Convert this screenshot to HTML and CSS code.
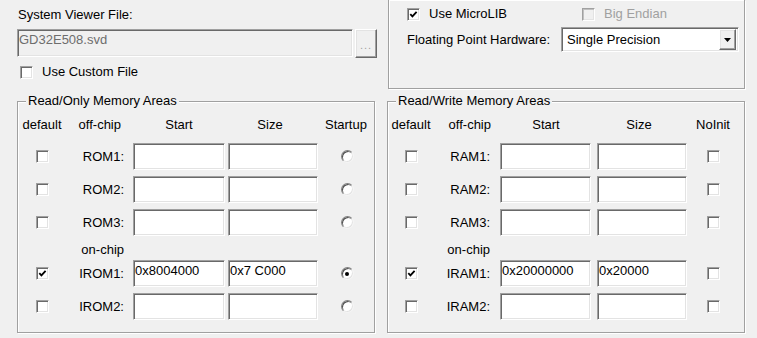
FILE: index.html
```html
<!DOCTYPE html>
<html lang="en">
<head>
    <meta charset="UTF-8">
    <title>Options for Target - Target</title>
    <link rel="stylesheet" href="styles.css">
</head>
<body>
    <div class="dialog">
        <div class="top-row">
            <div class="svd-panel">
                <div class="caption">System Viewer File:</div>
                <div class="file-line">
                    <div class="edit disabled">GD32E508.svd</div>
                    <div class="push-btn">...</div>
                </div>
                <div class="check-line custom">
                    <span class="check"></span>
                    <span>Use Custom File</span>
                </div>
            </div>

            <div class="group open-top">
                <div class="check-line lib">
                    <div class="check-item wide">
                        <span class="check checked"><svg viewBox="0 0 11 11"><path d="M2.3 5.2 4.4 7.4 8.6 2.8"/></svg></span>
                        <span>Use MicroLIB</span>
                    </div>
                    <div class="check-item">
                        <span class="check disabled"></span>
                        <span class="muted">Big Endian</span>
                    </div>
                </div>
                <div class="fp-line">
                    <span class="fp-label">Floating Point Hardware:</span>
                    <div class="combo">
                        <span class="combo-text">Single Precision</span>
                        <span class="combo-btn"><svg viewBox="0 0 7 4"><polygon points="0,0 7,0 3.5,4"/></svg></span>
                    </div>
                </div>
            </div>
        </div>

        <div class="areas">
            <fieldset class="mem-group ro">
                <legend>Read/Only Memory Areas</legend>
                <div class="mem-grid">
                    <span class="hd">default</span>
                    <span class="hd chip">off-chip</span>
                    <span class="hd start">Start</span>
                    <span class="hd size">Size</span>
                    <span class="hd">Startup</span>

                    <span class="check"></span>
                    <span class="row-label">ROM1:</span>
                    <div class="edit"></div>
                    <div class="edit"></div>
                    <span class="radio"></span>

                    <span class="check"></span>
                    <span class="row-label">ROM2:</span>
                    <div class="edit"></div>
                    <div class="edit"></div>
                    <span class="radio"></span>

                    <span class="check"></span>
                    <span class="row-label">ROM3:</span>
                    <div class="edit"></div>
                    <div class="edit"></div>
                    <span class="radio"></span>

                    <span></span>
                    <span class="row-label onchip">on-chip</span>
                    <span></span><span></span><span></span>

                    <span class="check checked"><svg viewBox="0 0 11 11"><path d="M2.3 5.2 4.4 7.4 8.6 2.8"/></svg></span>
                    <span class="row-label">IROM1:</span>
                    <div class="edit">0x8004000</div>
                    <div class="edit">0x7 C000</div>
                    <span class="radio on"></span>

                    <span class="check"></span>
                    <span class="row-label">IROM2:</span>
                    <div class="edit"></div>
                    <div class="edit"></div>
                    <span class="radio"></span>
                </div>
            </fieldset>

            <fieldset class="mem-group rw">
                <legend>Read/Write Memory Areas</legend>
                <div class="mem-grid">
                    <span class="hd">default</span>
                    <span class="hd chip">off-chip</span>
                    <span class="hd start">Start</span>
                    <span class="hd size">Size</span>
                    <span class="hd">NoInit</span>

                    <span class="check"></span>
                    <span class="row-label">RAM1:</span>
                    <div class="edit"></div>
                    <div class="edit"></div>
                    <span class="check"></span>

                    <span class="check"></span>
                    <span class="row-label">RAM2:</span>
                    <div class="edit"></div>
                    <div class="edit"></div>
                    <span class="check"></span>

                    <span class="check"></span>
                    <span class="row-label">RAM3:</span>
                    <div class="edit"></div>
                    <div class="edit"></div>
                    <span class="check"></span>

                    <span></span>
                    <span class="row-label onchip">on-chip</span>
                    <span></span><span></span><span></span>

                    <span class="check checked"><svg viewBox="0 0 11 11"><path d="M2.3 5.2 4.4 7.4 8.6 2.8"/></svg></span>
                    <span class="row-label">IRAM1:</span>
                    <div class="edit">0x20000000</div>
                    <div class="edit">0x20000</div>
                    <span class="check"></span>

                    <span class="check"></span>
                    <span class="row-label">IRAM2:</span>
                    <div class="edit"></div>
                    <div class="edit"></div>
                    <span class="check"></span>
                </div>
            </fieldset>
        </div>
    </div>
</body>
</html>
```

FILE: styles.css
```css
body {
    margin: 0;
    background: #f0f0f0;
    font-family: "Liberation Sans", Arial, sans-serif;
    font-size: 13px;
    line-height: 16px;
    color: #000;
    width: 757px;
    height: 338px;
    overflow: hidden;
}
.dialog {
    padding-left: 17px;
}
.top-row {
    display: flex;
    height: 89px;
}
.svd-panel {
    width: 361px;
    margin-right: 10px;
}
.caption {
    padding: 7px 0 0 1px;
}
.file-line {
    display: flex;
    margin-top: 6px;
}
.file-line .edit {
    width: 336px;
    height: 28px;
}
.push-btn {
    box-sizing: border-box;
    width: 22px;
    height: 29px;
    margin-left: 2px;
    border: 1px solid;
    border-color: #fff #696969 #696969 #fff;
    box-shadow: inset -1px -1px 0 #a0a0a0, inset 1px 1px 0 #e3e3e3;
    color: #a0a0a0;
    font-size: 11px;
    letter-spacing: 1px;
    text-align: center;
    line-height: 30px;
}
.check-line {
    display: flex;
    align-items: center;
}
.check-line.custom {
    margin: 6px 0 0 3px;
}
.check-line.custom .check {
    margin-right: 9px;
}
.group {
    box-sizing: border-box;
    border: 1px solid #a0a0a0;
    box-shadow: inset 1px 1px 0 #fff, 1px 1px 0 #fff;
}
.open-top {
    border-top: none;
    width: 357px;
    height: 89px;
    padding-left: 18px;
}
.check-line.lib {
    padding-top: 6px;
}
.check-item {
    display: flex;
    align-items: center;
}
.check-item.wide {
    width: 175px;
}
.check-item .check {
    margin-right: 9px;
}
.muted {
    color: #a0a0a0;
}
.fp-line {
    display: flex;
    align-items: center;
    margin-top: 5px;
}
.fp-label {
    width: 154px;
}
.combo {
    box-sizing: border-box;
    display: flex;
    align-items: center;
    width: 178px;
    height: 25px;
    background: #fff;
    border: 1px solid;
    border-color: #a0a0a0 #fff #fff #a0a0a0;
    box-shadow: inset 1px 1px 0 #696969, inset -1px -1px 0 #e3e3e3;
    padding: 2px 2px 2px 5px;
}
.combo-text {
    flex: 1;
}
.combo-btn {
    box-sizing: border-box;
    display: flex;
    align-items: center;
    justify-content: center;
    width: 17px;
    height: 21px;
    background: #f0f0f0;
    border: 1px solid;
    border-color: #fff #696969 #696969 #fff;
    box-shadow: inset -1px -1px 0 #a0a0a0, inset 1px 1px 0 #e3e3e3;
}
.combo-btn svg {
    width: 7px;
    height: 4px;
    fill: #000;
}
.edit {
    box-sizing: border-box;
    height: 27px;
    background: #fff;
    border: 1px solid;
    border-color: #a0a0a0 #fff #fff #a0a0a0;
    box-shadow: inset 1px 1px 0 #696969, inset -1px -1px 0 #e3e3e3;
    padding: 2px 3px 0 1px;
    white-space: nowrap;
    overflow: hidden;
}
.edit.disabled {
    background: #f0f0f0;
    color: #6d6d6d;
}
.check {
    box-sizing: border-box;
    display: inline-block;
    width: 13px;
    height: 13px;
    background: #fff;
    border: 1px solid;
    border-color: #a0a0a0 #fff #fff #a0a0a0;
    box-shadow: inset 1px 1px 0 #696969, inset -1px -1px 0 #e3e3e3;
    flex-shrink: 0;
}
.check svg {
    display: block;
    width: 11px;
    height: 11px;
    fill: none;
    stroke: #000;
    stroke-width: 1.8;
}
.check.disabled {
    background: #f0f0f0;
    box-shadow: inset 1px 1px 0 #c0c0c0, inset -1px -1px 0 #e3e3e3;
}
.radio {
    box-sizing: border-box;
    display: flex;
    align-items: center;
    justify-content: center;
    width: 13px;
    height: 13px;
    border-radius: 50%;
    background: #fff;
    border: 1px solid;
    border-color: #808080 #f4f4f4 #f4f4f4 #808080;
    box-shadow: inset 1px 1px 0 #505050, inset -1px -1px 0 #e3e3e3;
    margin-left: 2px;
}
.radio.on::after {
    content: "";
    width: 4px;
    height: 4px;
    border-radius: 50%;
    background: #000;
}
.areas {
    display: flex;
    margin-top: 4px;
}
.mem-group {
    box-sizing: border-box;
    width: 358px;
    height: 240px;
    margin: 0;
    padding: 0;
    min-width: 0;
    border: 1px solid #a0a0a0;
    box-shadow: inset 1px 1px 0 #fff, 1px 1px 0 #fff;
}
.mem-group.rw {
    margin-left: 12px;
}
.mem-group legend {
    margin-left: 8px;
    padding: 0 2px;
    background: #f0f0f0;
    line-height: 16px;
}
.mem-grid {
    display: grid;
    grid-template-columns: 48px 67px 95px 90px 56px;
    grid-template-rows: 27px 27px 27px 27px 12px 27px 27px;
    row-gap: 6px;
    align-items: center;
    justify-items: center;
    margin-top: 1px;
}
.rw .mem-grid {
    grid-template-columns: 46px 66px 97px 90px 52px;
}
.mem-grid .edit {
    justify-self: start;
    width: 92px;
}
.rw .mem-grid .edit {
    width: 91px;
}
.mem-grid .edit + .edit {
    width: 90px;
}
.hd {
    align-self: end;
    padding-bottom: 4px;
}
.hd.chip {
    justify-self: end;
    padding-right: 12px;
}
.rw .hd.chip {
    padding-right: 9px;
}
.hd.start {
    justify-self: start;
    width: 92px;
    text-align: center;
}
.hd.size {
    justify-self: start;
    width: 84px;
    text-align: center;
}
.row-label {
    justify-self: end;
    padding-right: 9px;
}
.rw .row-label {
    padding-right: 10px;
}
.row-label.onchip {
    align-self: start;
    height: 12px;
}
```
